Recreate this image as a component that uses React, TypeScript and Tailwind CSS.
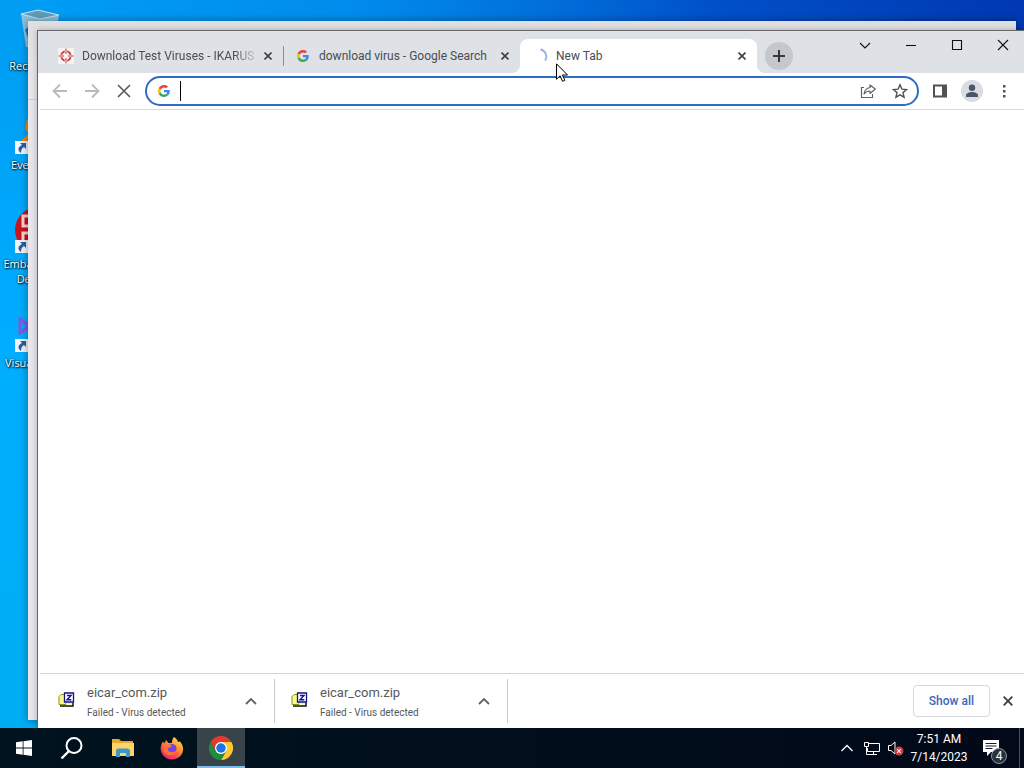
import type { ReactNode } from 'react';

interface TabInfo {
  title: string;
  icon: ReactNode;
  active?: boolean;
  divider?: boolean;
}

interface DownloadInfo {
  id: number;
  file: string;
  status: string;
}

const TABS: TabInfo[] = [
  { title: 'Download Test Viruses - IKARUS', icon: <IkarusIcon />, divider: true },
  { title: 'download virus - Google Search', icon: <GoogleIcon /> },
  { title: 'New Tab', icon: <SpinnerIcon />, active: true },
];

const DOWNLOADS: DownloadInfo[] = [
  { id: 1, file: 'eicar_com.zip', status: 'Failed - Virus detected' },
  { id: 2, file: 'eicar_com.zip', status: 'Failed - Virus detected' },
];

export default function App() {
  return (
    <div className="flex h-screen flex-col overflow-hidden font-['Roboto','Open_Sans',sans-serif] text-xs">
      <main className="relative flex-1 overflow-hidden bg-[linear-gradient(to_right,#009ff5,#008cec_35%,#0070dc_53%,#0050c8_70%,#0038b2)]">
        <div className="absolute inset-y-0 left-0 w-10 bg-linear-to-b from-[#009cf2] via-[#00aeff] to-[#00aef4]" />
        <DesktopIcons />

        {/* Window behind the browser */}
        <div className="absolute top-[21px] right-2 bottom-2 left-7 bg-linear-to-b from-[#dfdfe1] to-[#e8e6ea] to-10% shadow-[0_0_8px_rgba(0,0,0,0.4)]">
          <div className="mt-[78px] h-px bg-[#cfcfd2]" />
        </div>

        <BrowserWindow />
        <Cursor />
      </main>
      <Taskbar />
    </div>
  );
}

function DesktopIcons() {
  return (
    <ul className="relative w-[76px] pt-2 font-['Open_Sans','Noto_Sans',sans-serif] text-white">
      <DesktopIcon label="Recycle Bin">
        <svg viewBox="0 0 48 48" className="size-12">
          <path d="M7 6 24 2 45 7 39 41 12 39Z" fill="#8cc3e0" />
          <path d="M7 6 24 2 45 7 26 11Z" fill="#5f9dbd" stroke="#c4e0ee" strokeWidth="1.2" />
          <path d="M10 9 24 13 25 38 14 36Z" fill="#8dbfd8" />
          <path d="m11 22 4-4 3 10-3 4Z" fill="#1f76bd" />
        </svg>
      </DesktopIcon>
      <DesktopIcon label="Everything" shortcut>
        <svg viewBox="0 0 48 48" className="size-12">
          <circle cx="25" cy="19" r="11" fill="#6db6e0" stroke="#e8891c" strokeWidth="5" />
          <path d="M18 28 6 40" stroke="#e8891c" strokeWidth="7" />
        </svg>
      </DesktopIcon>
      <DesktopIcon label="Embarcadero Dev-C++" shortcut>
        <svg viewBox="0 0 48 48" className="size-12">
          <circle cx="24" cy="24" r="23" fill="#c8141c" />
          <path d="M9 10h9v10H9zM18 27H9v11h9" fill="none" stroke="#f6d4d4" strokeWidth="3" />
        </svg>
      </DesktopIcon>
      <DesktopIcon label="Visual Studio" shortcut>
        <svg viewBox="0 0 48 48" className="size-12">
          <path d="M6 14v14l9-7ZM6 14l30 22V8L6 28" fill="none" stroke="#8258e0" strokeWidth="3" />
        </svg>
      </DesktopIcon>
    </ul>
  );
}

function DesktopIcon({ label, shortcut, children }: { label: string; shortcut?: boolean; children: ReactNode }) {
  return (
    <li className="flex h-[99px] flex-col items-center">
      <div className="relative size-12">
        {children}
        {shortcut && (
          <svg viewBox="0 0 13 13" className="absolute bottom-px left-px size-[13px]">
            <path d="M0 0h13v13H0z" fill="#f4f6fa" />
            <path d="M5 2h6v6L9 6C7 7 6 9 6 12 2 9 3 6 7 4Z" fill="#2a5ea8" />
          </svg>
        )}
      </div>
      <span className="mt-0.5 text-center text-[11px] leading-[15px] [text-shadow:1px_1px_2px_#000,0_0_2px_#000]">
        {label}
      </span>
    </li>
  );
}

function BrowserWindow() {
  return (
    <section className="absolute top-[30px] -right-0.5 bottom-0 left-[37px] flex flex-col border-t border-l border-[#66686c] bg-white shadow-[0_0_6px_rgba(0,0,0,0.25)]">
      <TabStrip />
      <Toolbar />
      <div className="flex-1 bg-white" />
      <DownloadBar />
    </section>
  );
}

function TabStrip() {
  return (
    <header className="flex h-[42px] items-end bg-[#dee1e6] pl-2">
      {TABS.map((tab) => (
        <Tab key={tab.title} {...tab} />
      ))}
      <button
        type="button"
        aria-label="New tab"
        className="mb-[3px] ml-2 flex size-7 shrink-0 items-center justify-center rounded-full bg-[#c4c7cb]"
      >
        <svg viewBox="0 0 12 12" className="size-3">
          <path d="M6 0v12M0 6h12" stroke="#36383b" strokeWidth="2" />
        </svg>
      </button>
      <div className="ml-auto flex self-start">
        <WindowButton label="Search tabs" path="m1 4 5 5 5-5" />
        <WindowButton label="Minimize" path="M1 6.500h10" />
        <WindowButton label="Maximize" path="M1.500 1.500h9v9h-9z" />
        <WindowButton label="Close" path="m1 1 10 10M11 1 1 11" />
      </div>
    </header>
  );
}

function Tab({ title, icon, active, divider }: TabInfo) {
  return (
    <div
      className={`relative flex h-[34px] w-[237px] min-w-0 items-center pr-[7px] pl-3 text-[#4a4d51] ${
        active ? 'rounded-t-lg bg-white' : ''
      }`}
    >
      {icon}
      <span
        className={`ml-2 flex-1 overflow-hidden whitespace-nowrap ${divider ? 'mask-r-from-85%' : ''}`}
      >
        {title}
      </span>
      <button type="button" aria-label={`Close ${title}`} className="flex size-4 items-center justify-center">
        <CrossIcon className="size-2" width={2} />
      </button>
      {divider && <span className="absolute -right-px h-5 w-px bg-[#8b8e93]" />}
      {active && (
        <>
          <TabFoot className="absolute bottom-0 -left-2 size-2" />
          <TabFoot className="absolute -right-2 bottom-0 size-2 -scale-x-100" />
        </>
      )}
    </div>
  );
}

function TabFoot({ className }: { className: string }) {
  return (
    <svg viewBox="0 0 8 8" className={className}>
      <path d="M8 0v8H0c4.400 0 8-3.600 8-8Z" fill="#fff" />
    </svg>
  );
}

function WindowButton({ label, path }: { label: string; path: string }) {
  return (
    <button type="button" aria-label={label} className="flex h-7 w-[46px] items-center justify-center">
      <svg viewBox="0 0 12 12" className="size-3">
        <path d={path} fill="none" stroke="#111" strokeWidth="1.1" />
      </svg>
    </button>
  );
}

function Toolbar() {
  return (
    <div className="ml-0.5 flex h-[37px] items-center border-b border-[#d5d8dc] pr-1.5 pl-1">
      <ToolButton label="Back">
        <path d="M15 8H2M8 1.500 1.500 8 8 14.500" stroke="#b9bbbe" strokeWidth="1.800" />
      </ToolButton>
      <ToolButton label="Forward">
        <path d="M1 8h13M8 1.500 14.500 8 8 14.500" stroke="#b9bbbe" strokeWidth="1.800" />
      </ToolButton>
      <ToolButton label="Stop loading">
        <path d="m2 2 12 12M14 2 2 14" stroke="#55585c" strokeWidth="1.600" />
      </ToolButton>

      {/* Address bar */}
      <div className="ml-[5px] flex h-[30px] flex-1 items-center rounded-full border-2 border-[#2f6cc4] bg-white pr-px pl-[9px]">
        <GoogleIcon />
        <span className="ml-2 h-5 w-px bg-black" />
        <input type="text" aria-label="Address and search bar" className="min-w-0 flex-1 px-1 outline-none" />
        <ToolButton label="Share this page">
          <path d="M4 4.500H1.500v10h11V11" stroke="#5f6368" strokeWidth="1.200" />
          <path
            d="M10 2v2.500C6.500 5 4.500 7.500 4 11c1.500-2 3.300-3 6-3v2.500L15.300 6Z"
            stroke="#5f6368"
            strokeWidth="1.200"
            strokeLinejoin="round"
          />
        </ToolButton>
        <ToolButton label="Bookmark this tab">
          <path d="m8 1.800 1.900 4.300 4.700.4-3.600 3.100 1.100 4.600L8 11.800l-4.100 2.400L5 9.600 1.400 6.500l4.700-.4Z" stroke="#505357" strokeWidth="1.400" />
        </ToolButton>
      </div>

      <div className="ml-[5px] flex">
        <ToolButton label="Side panel">
          <path d="M2 2.500h12v11H2z" stroke="#505357" strokeWidth="2" />
          <path d="M10 2h4v12h-4z" fill="#505357" />
        </ToolButton>
        <button type="button" aria-label="Profile" className="flex w-8 items-center justify-center">
          <svg viewBox="0 0 22 22" className="size-[22px]">
            <circle cx="11" cy="11" r="11" fill="#dadce3" />
            <circle cx="11" cy="7.700" r="3.200" fill="#4b5468" />
            <path d="M5 17v-1.500c0-2.200 3-3.500 6-3.500s6 1.300 6 3.500V17Z" fill="#4b5468" />
          </svg>
        </button>
        <ToolButton label="Menu">
          <path d="M7 2h2.500v2.500H7zM7 7h2.500v2.500H7zM7 12h2.500v2.500H7z" fill="#505357" />
        </ToolButton>
      </div>
    </div>
  );
}

function ToolButton({ label, children }: { label: string; children: ReactNode }) {
  return (
    <button type="button" aria-label={label} className="flex h-6 w-8 shrink-0 items-center justify-center">
      <svg viewBox="0 0 16 16" fill="none" className="size-4">
        {children}
      </svg>
    </button>
  );
}

function DownloadBar() {
  return (
    <footer className="ml-0.5 flex h-[55px] items-center border-t border-[#d3d5d8] pr-2.5 pl-0.5">
      {DOWNLOADS.map((d) => (
        <Download key={d.id} {...d} />
      ))}
      <button
        type="button"
        className="ml-auto h-8 rounded border border-[#d5d7db] px-[15px] font-medium text-[#3a69b5]"
      >
        Show all
      </button>
      <button type="button" aria-label="Close downloads bar" className="ml-2.5 flex size-4 items-center justify-center">
        <CrossIcon className="size-2.5" width={1.8} />
      </button>
    </footer>
  );
}

function Download({ file, status }: DownloadInfo) {
  return (
    <div className="flex h-11 w-[233px] items-center border-r border-[#c9cbce] pr-[17px] pl-4">
      <svg viewBox="0 0 17 16" className="mb-1 size-[17px] shrink-0">
        <path d="M1 5 3 3h5v10H1z" fill="#f7f98c" stroke="#8d9414" />
        <path d="M2 14.500h13V11" fill="none" stroke="#111" strokeWidth="1.500" />
        <path d="M8 11h6v2H8z" fill="#f7f98c" />
        <path d="M6.500 1.500h9v9h-9z" fill="#fff" stroke="#14128c" strokeWidth="1.300" />
        <path d="M9 4h4l-4 4.300h4.300" fill="none" stroke="#14128c" strokeWidth="1.400" />
      </svg>
      <div className="ml-3 flex-1 pt-1">
        <p className="text-[13px] leading-5 text-[#55585c]">{file}</p>
        <p className="text-[10px] leading-5 text-[#55585c]">{status}</p>
      </div>
      <button type="button" aria-label={`Options for ${file}`}>
        <svg viewBox="0 0 12 12" className="size-3">
          <path d="m1 9 5-5 5 5" fill="none" stroke="#5f6368" strokeWidth="1.800" />
        </svg>
      </button>
    </div>
  );
}

function Taskbar() {
  return (
    <nav className="flex h-10 shrink-0 bg-linear-to-r from-[#00131f] to-[#020919] text-white">
      <TaskButton label="Start">
        <svg viewBox="0 0 16 16" className="size-4">
          <path d="M0 2.300 6.700 1.300v6.300H0zM7.500 1.200 16 0v7.600H7.500zM0 8.400h6.700v6.300L0 13.700zM7.500 8.400H16V16l-8.500-1.200z" fill="#fff" />
        </svg>
      </TaskButton>
      <TaskButton label="Search">
        <svg viewBox="0 0 24 24" className="size-6">
          <circle cx="14" cy="9.500" r="7.500" fill="none" stroke="#fff" strokeWidth="2" />
          <path d="M9 15 1.500 22.500" stroke="#fff" strokeWidth="2.400" />
        </svg>
      </TaskButton>
      <div className="flex gap-px pl-[3px]">
        <TaskButton label="File Explorer">
          <svg viewBox="0 0 24 20" className="h-5 w-6">
            <path d="M1 1h7l2 2h12v4H1z" fill="#e4a92e" />
            <path d="M1 5h22v13H1z" fill="#fbd667" />
            <path d="M5 19v-6c0-1.500 1-2.500 2.500-2.500h9c1.500 0 2.500 1 2.500 2.500v6h-4v-4H9v4Z" fill="#3f96c9" />
          </svg>
        </TaskButton>
        <TaskButton label="Firefox">
          <FirefoxIcon />
        </TaskButton>
        <TaskButton label="Google Chrome" active>
          <ChromeIcon />
        </TaskButton>
      </div>

      {/* Notification area */}
      <div className="ml-auto flex items-center">
        <button type="button" aria-label="Show hidden icons" className="flex w-6 justify-center">
          <svg viewBox="0 0 12 12" className="size-3">
            <path d="m0.500 9 5.500-5.500L11.500 9" fill="none" stroke="#fff" strokeWidth="1.300" />
          </svg>
        </button>
        <button type="button" aria-label="Network" className="flex w-6 justify-center">
          <svg viewBox="0 0 17 15" fill="none" stroke="#fff" className="h-[15px] w-[17px]">
            <path d="M6 2.500h10.500v8H4.500V7M8 13.500h6M10.500 11v2.500M1.500 1.500h4v4h-4zM3.500 6v7.500H8" />
          </svg>
        </button>
        <button type="button" aria-label="Volume muted" className="flex w-6 justify-center">
          <svg viewBox="0 0 17 16" className="h-4 w-[17px]">
            <path d="M1.500 5.500H4L8 2v12L4 10.500H1.500z" fill="none" stroke="#fff" />
            <circle cx="12" cy="11" r="4.500" fill="#cf3a3e" />
            <path d="m10.200 9.200 3.600 3.600M13.800 9.200l-3.600 3.600" stroke="#fff" strokeWidth="1.100" />
          </svg>
        </button>
        <div className="w-16 text-center leading-[18px]">
          <p>7:51 AM</p>
          <p>7/14/2023</p>
        </div>
        <button type="button" aria-label="4 notifications" className="relative flex h-10 w-10 items-center justify-center">
          <svg viewBox="0 0 16 16" className="size-4">
            <path d="M0 0h16v12H8l-4 4v-4H0z" fill="#fff" />
            <path d="M2.500 3.500h11M2.500 6h11M2.500 8.500h7" stroke="#10202c" />
          </svg>
          <span className="absolute right-1 bottom-1 flex size-4 items-center justify-center rounded-full border border-[#8d949b] bg-[#28323c] leading-none">
            4
          </span>
        </button>
        <span className="mr-1 ml-2 h-10 w-px bg-[#4a515d]" />
      </div>
    </nav>
  );
}

function TaskButton({ label, active, children }: { label: string; active?: boolean; children: ReactNode }) {
  return (
    <button
      type="button"
      aria-label={label}
      className={`flex w-12 items-center justify-center ${
        active ? 'border-t-2 border-b-2 border-t-[#38444a] border-b-[#7dbdec] bg-[#38444a]' : ''
      }`}
    >
      {children}
    </button>
  );
}

function CrossIcon({ className, width }: { className: string; width: number }) {
  return (
    <svg viewBox="0 0 10 10" className={className}>
      <path d="m0.700 0.700 8.600 8.600M9.300 0.700 0.700 9.300" stroke="#3c4043" strokeWidth={width} />
    </svg>
  );
}

function IkarusIcon() {
  return (
    <svg viewBox="0 0 16 16" className="size-4 shrink-0">
      <path d="M0 0h16v16H0z" fill="#f6f2f2" />
      <circle cx="8" cy="8" r="4.700" fill="none" stroke="#c4392f" strokeWidth="2" />
      <path d="M8 1v14M1 8h14" stroke="#f6f2f2" strokeWidth="2.600" />
      <path d="M8 .5v5.500M8 10v5.500M.5 8H6M10 8h5.500" stroke="#b5473f" />
    </svg>
  );
}

function GoogleIcon() {
  return (
    <svg viewBox="0 0 48 48" className="mx-0.5 size-3 shrink-0">
      <path fill="#EA4335" d="M24 9.500c3.540 0 6.710 1.220 9.210 3.600l6.850-6.850C35.900 2.380 30.470 0 24 0 14.620 0 6.510 5.380 2.560 13.220l7.980 6.190C12.430 13.720 17.740 9.500 24 9.500z" />
      <path fill="#4285F4" d="M46.980 24.550c0-1.570-.15-3.090-.38-4.550H24v9.020h12.940c-.58 2.960-2.260 5.480-4.780 7.180l7.730 6c4.510-4.180 7.090-10.360 7.090-17.650z" />
      <path fill="#FBBC05" d="M10.530 28.590c-.48-1.450-.76-2.990-.76-4.590s.27-3.140.76-4.590l-7.980-6.190C.92 16.460 0 20.120 0 24c0 3.880.92 7.540 2.560 10.780l7.970-6.190z" />
      <path fill="#34A853" d="M24 48c6.480 0 11.930-2.130 15.890-5.810l-7.730-6c-2.150 1.450-4.920 2.300-8.160 2.300-6.260 0-11.570-4.220-13.470-9.910l-7.980 6.190C6.510 42.620 14.620 48 24 48z" />
    </svg>
  );
}

function SpinnerIcon() {
  return (
    <svg viewBox="0 0 16 16" className="size-4 shrink-0">
      <path d="M8.500 1.500c5 1 7.500 7 4.500 11" fill="none" stroke="#8fb4e3" strokeWidth="1.800" />
    </svg>
  );
}

function FirefoxIcon() {
  return (
    <svg viewBox="0 0 24 24" className="size-6">
      <defs>
        <linearGradient id="flame" x1="0.8" y1="0" x2="0.2" y2="1">
          <stop offset="0" stopColor="#ffe14a" />
          <stop offset="0.45" stopColor="#ff8a2a" />
          <stop offset="0.75" stopColor="#ff3c50" />
          <stop offset="1" stopColor="#e01e8c" />
        </linearGradient>
      </defs>
      <path d="M14 1c2 1 3.500 3 4 5l2-.5c2.500 3 3.500 6 3 9C22.200 20 17.500 23.500 12 23.500S1.500 19.500.800 14C.300 10.500 1.500 7.500 3 5.500l1.500 2L6 4l2.500 3H12c0-2.500.500-4.500 2-6Z" fill="url(#flame)" />
      <circle cx="12" cy="12.500" r="4.500" fill="#7542e5" />
      <path d="M4 9c3-1.500 6-1 8 1-1.500 2-4 1.500-4.500 3 .5 3 5 4.500 8.500 1.500-1 4-5 5.500-8.500 4.500S2.500 14 4 9Z" fill="#ff7139" />
    </svg>
  );
}

function ChromeIcon() {
  return (
    <svg viewBox="0 0 48 48" className="size-6">
      <path d="M24 12h20.800A24 24 0 0 1 24 48l10.400-18Z" fill="#fcc934" />
      <path d="M13.600 30 3.200 12A24 24 0 0 0 24 48l10.400-18Z" fill="#1e8e3e" />
      <path d="M24 12h20.800A24 24 0 0 0 3.200 12l10.400 18Z" fill="#e33b2e" />
      <circle cx="24" cy="24" r="12" fill="#fff" />
      <circle cx="24" cy="24" r="9.500" fill="#1a73e8" />
    </svg>
  );
}

function Cursor() {
  return (
    <svg viewBox="0 0 12 19" className="absolute top-[63px] left-[556px] h-[19px] w-3">
      <path d="M.500.800v15.400l3.600-3.400 2.400 5.500 2.300-1-2.400-5.300h5.100Z" fill="#fff" stroke="#000" />
    </svg>
  );
}
